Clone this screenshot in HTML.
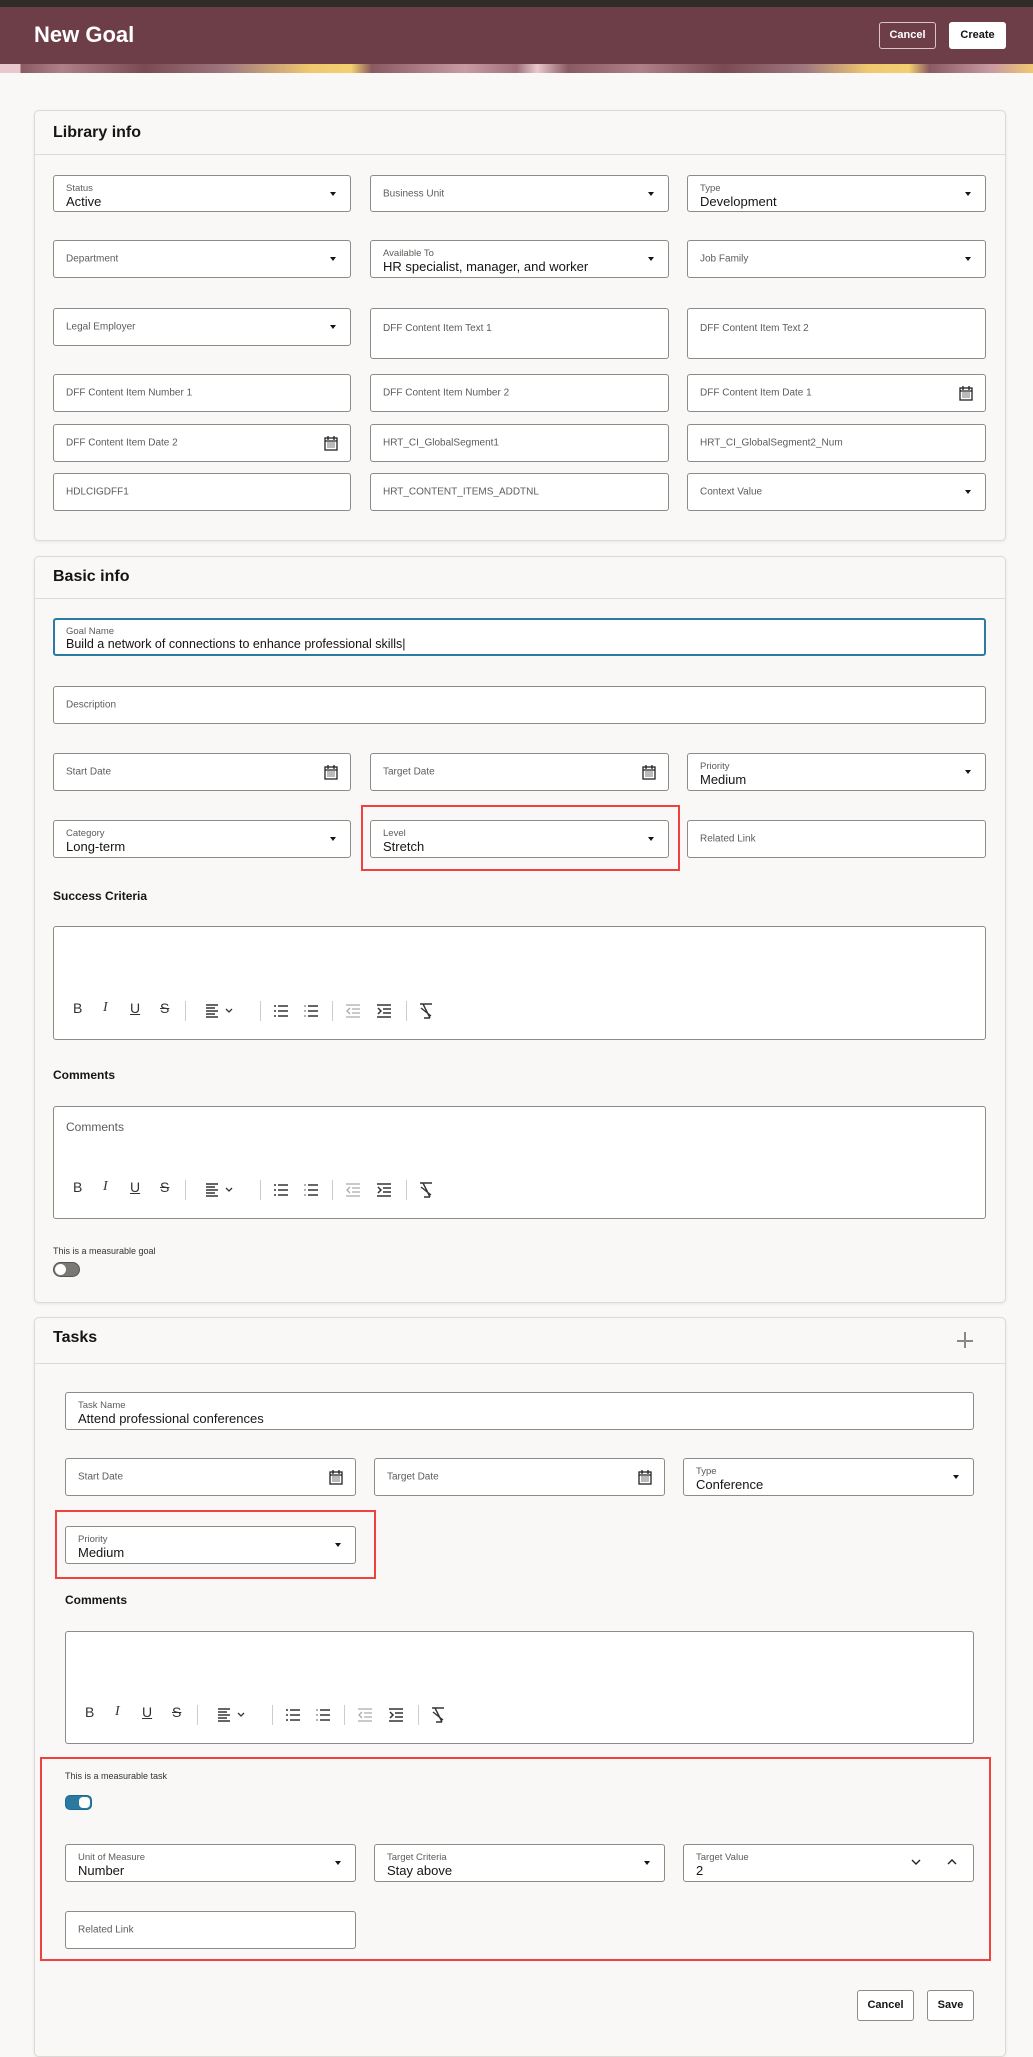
<!DOCTYPE html>
<html><head><meta charset="utf-8"><style>
*{box-sizing:border-box;margin:0;padding:0}
body{width:1033px;height:2045px;background:#f9f8f6;font-family:"Liberation Sans",sans-serif;color:#161513;position:relative;overflow:hidden}
.a{position:absolute}
.card{position:absolute;background:#f9f8f6;border:1px solid #dcdad6;border-radius:5px;box-shadow:0 1px 3px rgba(0,0,0,.08)}
.ch{position:absolute;left:18px;font-size:16px;font-weight:bold}
.dv{position:absolute;left:0;right:0;height:1px;background:#dcdad6}
.f{position:absolute;background:#fff;border:1px solid #8d8b87;border-radius:3px}
.l{position:absolute;left:12px;top:7px;font-size:9.5px;color:#5e5c59}
.v{position:absolute;left:12px;top:18px;font-size:13px;color:#161513}
.p{position:absolute;left:12px;top:50%;transform:translateY(-50%);font-size:10px;color:#5e5c59}
.dd{position:absolute;right:14px;top:50%;margin-top:-2px;width:0;height:0;border-left:3.5px solid transparent;border-right:3.5px solid transparent;border-top:4.5px solid #161513}
.cal{position:absolute;right:12px;top:50%;margin-top:-8px}
.sec{position:absolute;font-size:12px;font-weight:bold}
.red{position:absolute;border:2px solid #f04040}
.tb{position:absolute;height:22px}
.tb span{position:absolute;top:0;font-size:14px;color:#333}
.sep{position:absolute;top:1px;width:1px;height:20px;background:#ccc}
.btn{position:absolute;border:1px solid #8d8b87;border-radius:3px;font-size:11px;font-weight:bold;text-align:center;background:#fff}
</style></head><body>
<div class="a" style="left:0;top:0;width:1033px;height:7px;background:#302b28"></div>
<div class="a" style="left:0;top:7px;width:1033px;height:57px;background:#6e3e48"></div>
<div class="a" style="left:0;top:64px;width:1033px;height:9px;background:linear-gradient(90deg,#e8c8cc 0,#e8c8cc 2%,#8a5a62 2%,#b08088 6%,#7a4a52 14%,#a07880 22%,#f0c870 30%,#f2d070 34%,#8a5a62 36%,#c89aa2 45%,#a0707a 50%,#e8c8cc 52%,#8a5a62 55%,#b08088 62%,#7a4a52 70%,#a07880 78%,#f0c870 84%,#f2d070 88%,#8a5a62 90%,#c89aa2 96%,#f0c870 100%)"></div>
<div class="a" style="left:34px;top:22px;font-size:22px;font-weight:bold;color:#fff">New Goal</div>
<div class="a" style="left:879px;top:22px;width:57px;height:27px;border:1px solid #d9c5c8;border-radius:3px;color:#fff;font-size:11px;font-weight:bold;text-align:center;line-height:25px">Cancel</div>
<div class="a" style="left:949px;top:22px;width:57px;height:27px;background:#fff;border-radius:3px;color:#161513;font-size:11px;font-weight:bold;text-align:center;line-height:27px">Create</div>

<!-- Library -->
<div class="card" style="left:34px;top:110px;width:972px;height:431px">
<div class="ch" style="top:13px">Library info</div><div class="dv" style="top:43px"></div></div>
<div class="f" style="left:53px;top:175px;width:298px;height:37px"><div class="l">Status</div><div class="v">Active</div><div class="dd"></div></div>
<div class="f" style="left:370px;top:175px;width:299px;height:37px"><div class="p">Business Unit</div><div class="dd"></div></div>
<div class="f" style="left:687px;top:175px;width:299px;height:37px"><div class="l">Type</div><div class="v">Development</div><div class="dd"></div></div>
<div class="f" style="left:53px;top:240px;width:298px;height:38px"><div class="p">Department</div><div class="dd"></div></div>
<div class="f" style="left:370px;top:240px;width:299px;height:38px"><div class="l">Available To</div><div class="v">HR specialist, manager, and worker</div><div class="dd"></div></div>
<div class="f" style="left:687px;top:240px;width:299px;height:38px"><div class="p">Job Family</div><div class="dd"></div></div>
<div class="f" style="left:53px;top:308px;width:298px;height:38px"><div class="p">Legal Employer</div><div class="dd"></div></div>
<div class="f" style="left:370px;top:308px;width:299px;height:51px"><div class="l" style="top:14px;font-size:10px">DFF Content Item Text 1</div></div>
<div class="f" style="left:687px;top:308px;width:299px;height:51px"><div class="l" style="top:14px;font-size:10px">DFF Content Item Text 2</div></div>
<div class="f" style="left:53px;top:374px;width:298px;height:38px"><div class="p">DFF Content Item Number 1</div></div>
<div class="f" style="left:370px;top:374px;width:299px;height:38px"><div class="p">DFF Content Item Number 2</div></div>
<div class="f" style="left:687px;top:374px;width:299px;height:38px"><div class="p">DFF Content Item Date 1</div><svg class="cal" width="14" height="16" viewBox="0 0 14 16"><rect x="1" y="3" width="12" height="12" fill="none" stroke="#222" stroke-width="1.3"/><path d="M4 1v4M10 1v4M1 6h12" stroke="#222" stroke-width="1.3"/><path d="M3 8h8M3 10h8M3 12h8" stroke="#777" stroke-width="1"/></svg></div>
<div class="f" style="left:53px;top:424px;width:298px;height:38px"><div class="p">DFF Content Item Date 2</div><svg class="cal" width="14" height="16" viewBox="0 0 14 16"><rect x="1" y="3" width="12" height="12" fill="none" stroke="#222" stroke-width="1.3"/><path d="M4 1v4M10 1v4M1 6h12" stroke="#222" stroke-width="1.3"/><path d="M3 8h8M3 10h8M3 12h8" stroke="#777" stroke-width="1"/></svg></div>
<div class="f" style="left:370px;top:424px;width:299px;height:38px"><div class="p">HRT_CI_GlobalSegment1</div></div>
<div class="f" style="left:687px;top:424px;width:299px;height:38px"><div class="p">HRT_CI_GlobalSegment2_Num</div></div>
<div class="f" style="left:53px;top:473px;width:298px;height:38px"><div class="p">HDLCIGDFF1</div></div>
<div class="f" style="left:370px;top:473px;width:299px;height:38px"><div class="p">HRT_CONTENT_ITEMS_ADDTNL</div></div>
<div class="f" style="left:687px;top:473px;width:299px;height:38px"><div class="p">Context Value</div><div class="dd"></div></div>

<!-- Basic -->
<div class="card" style="left:34px;top:556px;width:972px;height:747px">
<div class="ch" style="top:11px">Basic info</div><div class="dv" style="top:41px"></div></div>
<div class="f" style="left:53px;top:618px;width:933px;height:38px;border:2px solid #2b7ba3"><div class="l" style="left:11px;top:6px">Goal Name</div><div class="v" style="left:11px;top:17px;font-size:12.5px">Build a network of connections to enhance professional skills|</div></div>
<div class="f" style="left:53px;top:686px;width:933px;height:38px"><div class="p">Description</div></div>
<div class="f" style="left:53px;top:753px;width:298px;height:38px"><div class="p">Start Date</div><svg class="cal" width="14" height="16" viewBox="0 0 14 16"><rect x="1" y="3" width="12" height="12" fill="none" stroke="#222" stroke-width="1.3"/><path d="M4 1v4M10 1v4M1 6h12" stroke="#222" stroke-width="1.3"/><path d="M3 8h8M3 10h8M3 12h8" stroke="#777" stroke-width="1"/></svg></div>
<div class="f" style="left:370px;top:753px;width:299px;height:38px"><div class="p">Target Date</div><svg class="cal" width="14" height="16" viewBox="0 0 14 16"><rect x="1" y="3" width="12" height="12" fill="none" stroke="#222" stroke-width="1.3"/><path d="M4 1v4M10 1v4M1 6h12" stroke="#222" stroke-width="1.3"/><path d="M3 8h8M3 10h8M3 12h8" stroke="#777" stroke-width="1"/></svg></div>
<div class="f" style="left:687px;top:753px;width:299px;height:38px"><div class="l">Priority</div><div class="v">Medium</div><div class="dd"></div></div>
<div class="f" style="left:53px;top:820px;width:298px;height:38px"><div class="l">Category</div><div class="v">Long-term</div><div class="dd"></div></div>
<div class="f" style="left:370px;top:820px;width:299px;height:38px"><div class="l">Level</div><div class="v">Stretch</div><div class="dd"></div></div>
<div class="f" style="left:687px;top:820px;width:299px;height:38px"><div class="p">Related Link</div></div>
<div class="red" style="left:361px;top:805px;width:319px;height:66px"></div>
<div class="sec" style="left:53px;top:889px">Success Criteria</div>
<div class="f" style="left:53px;top:926px;width:933px;height:114px"></div>
<div class="sec" style="left:53px;top:1068px">Comments</div>
<div class="f" style="left:53px;top:1106px;width:933px;height:113px"><div class="l" style="top:13px;font-size:12px">Comments</div></div>
<div class="a" style="left:53px;top:1246px;font-size:9px;color:#333">This is a measurable goal</div>
<div class="a" style="left:53px;top:1262px;width:27px;height:15px;border-radius:8px;background:#7a7875;border:1px solid #555"><div class="a" style="left:1px;top:1px;width:11px;height:11px;border-radius:50%;background:#fff"></div></div>

<!-- Tasks -->
<div class="card" style="left:34px;top:1317px;width:972px;height:740px">
<div class="ch" style="top:11px">Tasks</div><div class="dv" style="top:45px"></div>
<div class="a" style="left:922px;top:22px;width:16px;height:1.5px;background:#888"></div><div class="a" style="left:929px;top:14px;width:1.5px;height:16px;background:#888"></div></div>
<div class="f" style="left:65px;top:1392px;width:909px;height:38px"><div class="l">Task Name</div><div class="v">Attend professional conferences</div></div>
<div class="f" style="left:65px;top:1458px;width:291px;height:38px"><div class="p">Start Date</div><svg class="cal" width="14" height="16" viewBox="0 0 14 16"><rect x="1" y="3" width="12" height="12" fill="none" stroke="#222" stroke-width="1.3"/><path d="M4 1v4M10 1v4M1 6h12" stroke="#222" stroke-width="1.3"/><path d="M3 8h8M3 10h8M3 12h8" stroke="#777" stroke-width="1"/></svg></div>
<div class="f" style="left:374px;top:1458px;width:291px;height:38px"><div class="p">Target Date</div><svg class="cal" width="14" height="16" viewBox="0 0 14 16"><rect x="1" y="3" width="12" height="12" fill="none" stroke="#222" stroke-width="1.3"/><path d="M4 1v4M10 1v4M1 6h12" stroke="#222" stroke-width="1.3"/><path d="M3 8h8M3 10h8M3 12h8" stroke="#777" stroke-width="1"/></svg></div>
<div class="f" style="left:683px;top:1458px;width:291px;height:38px"><div class="l">Type</div><div class="v">Conference</div><div class="dd"></div></div>
<div class="f" style="left:65px;top:1526px;width:291px;height:38px"><div class="l">Priority</div><div class="v">Medium</div><div class="dd"></div></div>
<div class="red" style="left:55px;top:1510px;width:321px;height:69px"></div>
<div class="sec" style="left:65px;top:1593px">Comments</div>
<div class="f" style="left:65px;top:1631px;width:909px;height:113px"></div>
<div class="red" style="left:40px;top:1757px;width:951px;height:204px"></div>
<div class="a" style="left:65px;top:1771px;font-size:9px;color:#333">This is a measurable task</div>
<div class="a" style="left:65px;top:1795px;width:27px;height:15px;border-radius:5px;background:#2a7aa0;border:1px solid #1d6a90"><div class="a" style="right:1px;top:1px;width:11px;height:11px;border-radius:4px;background:#fff"></div></div>
<div class="f" style="left:65px;top:1844px;width:291px;height:38px"><div class="l">Unit of Measure</div><div class="v">Number</div><div class="dd"></div></div>
<div class="f" style="left:374px;top:1844px;width:291px;height:38px"><div class="l">Target Criteria</div><div class="v">Stay above</div><div class="dd"></div></div>
<div class="f" style="left:683px;top:1844px;width:291px;height:38px"><div class="l">Target Value</div><div class="v">2</div>
<svg class="a" style="right:52px;top:13px" width="10" height="8" viewBox="0 0 10 8"><path d="M1 2l4 4 4-4" fill="none" stroke="#222" stroke-width="1.4"/></svg>
<svg class="a" style="right:16px;top:13px" width="10" height="8" viewBox="0 0 10 8"><path d="M1 6l4-4 4 4" fill="none" stroke="#222" stroke-width="1.4"/></svg></div>
<div class="f" style="left:65px;top:1911px;width:291px;height:38px"><div class="p">Related Link</div></div>
<div class="btn" style="left:857px;top:1990px;width:57px;height:31px;line-height:29px">Cancel</div>
<div class="btn" style="left:927px;top:1990px;width:47px;height:31px;line-height:29px">Save</div>

<script>
function tb(x,y){var s='<div class="tb" style="left:'+x+'px;top:'+(y-11)+'px;width:380px">'+
'<span style="left:0;font-family:Liberation Sans">B</span>'+
'<span style="left:30px;font-family:Liberation Serif;font-style:italic">I</span>'+
'<span style="left:57px;text-decoration:underline">U</span>'+
'<span style="left:87px;text-decoration:line-through">S</span>'+
'<div class="sep" style="left:112px"></div>'+
'<svg class="a" style="left:133px;top:4px" width="30" height="14" viewBox="0 0 30 14"><path d="M0 1h12M0 4h9M0 7h12M0 10h9M0 13h12" stroke="#333" stroke-width="1.5"/><path d="M20 5l3 3 3-3" fill="none" stroke="#333" stroke-width="1.3"/></svg>'+
'<div class="sep" style="left:187px"></div>'+
'<svg class="a" style="left:201px;top:5px" width="14" height="12" viewBox="0 0 14 12"><path d="M0 1h2M4 1h10M0 6h2M4 6h10M0 11h2M4 11h10" stroke="#333" stroke-width="1.4"/></svg>'+
'<svg class="a" style="left:231px;top:4px" width="14" height="14" viewBox="0 0 14 14"><path d="M4 2h10M4 7h10M4 12h10" stroke="#333" stroke-width="1.4"/><path d="M0 2h2M0 7h2M0 12h2" stroke="#666" stroke-width="1"/></svg>'+
'<div class="sep" style="left:259px"></div>'+
'<svg class="a" style="left:273px;top:4px" width="14" height="14" viewBox="0 0 14 14"><path d="M0 1h14M6 5h8M6 9h8M0 13h14M4 4L1 7l3 3" fill="none" stroke="#aaa" stroke-width="1.3"/></svg>'+
'<svg class="a" style="left:304px;top:4px" width="14" height="14" viewBox="0 0 14 14"><path d="M0 1h14M6 5h8M6 9h8M0 13h14M1 4l3 3-3 3" fill="none" stroke="#333" stroke-width="1.5"/></svg>'+
'<div class="sep" style="left:333px"></div>'+
'<svg class="a" style="left:346px;top:3px" width="14" height="16" viewBox="0 0 14 16"><path d="M1 1h12M4 1l7 14M5 15h6M2 5l10 8" fill="none" stroke="#333" stroke-width="1.4"/></svg>'+
'</div>';return s;}
document.write(tb(73,1011)+tb(73,1190)+tb(85,1715));
</script>
</body></html>
